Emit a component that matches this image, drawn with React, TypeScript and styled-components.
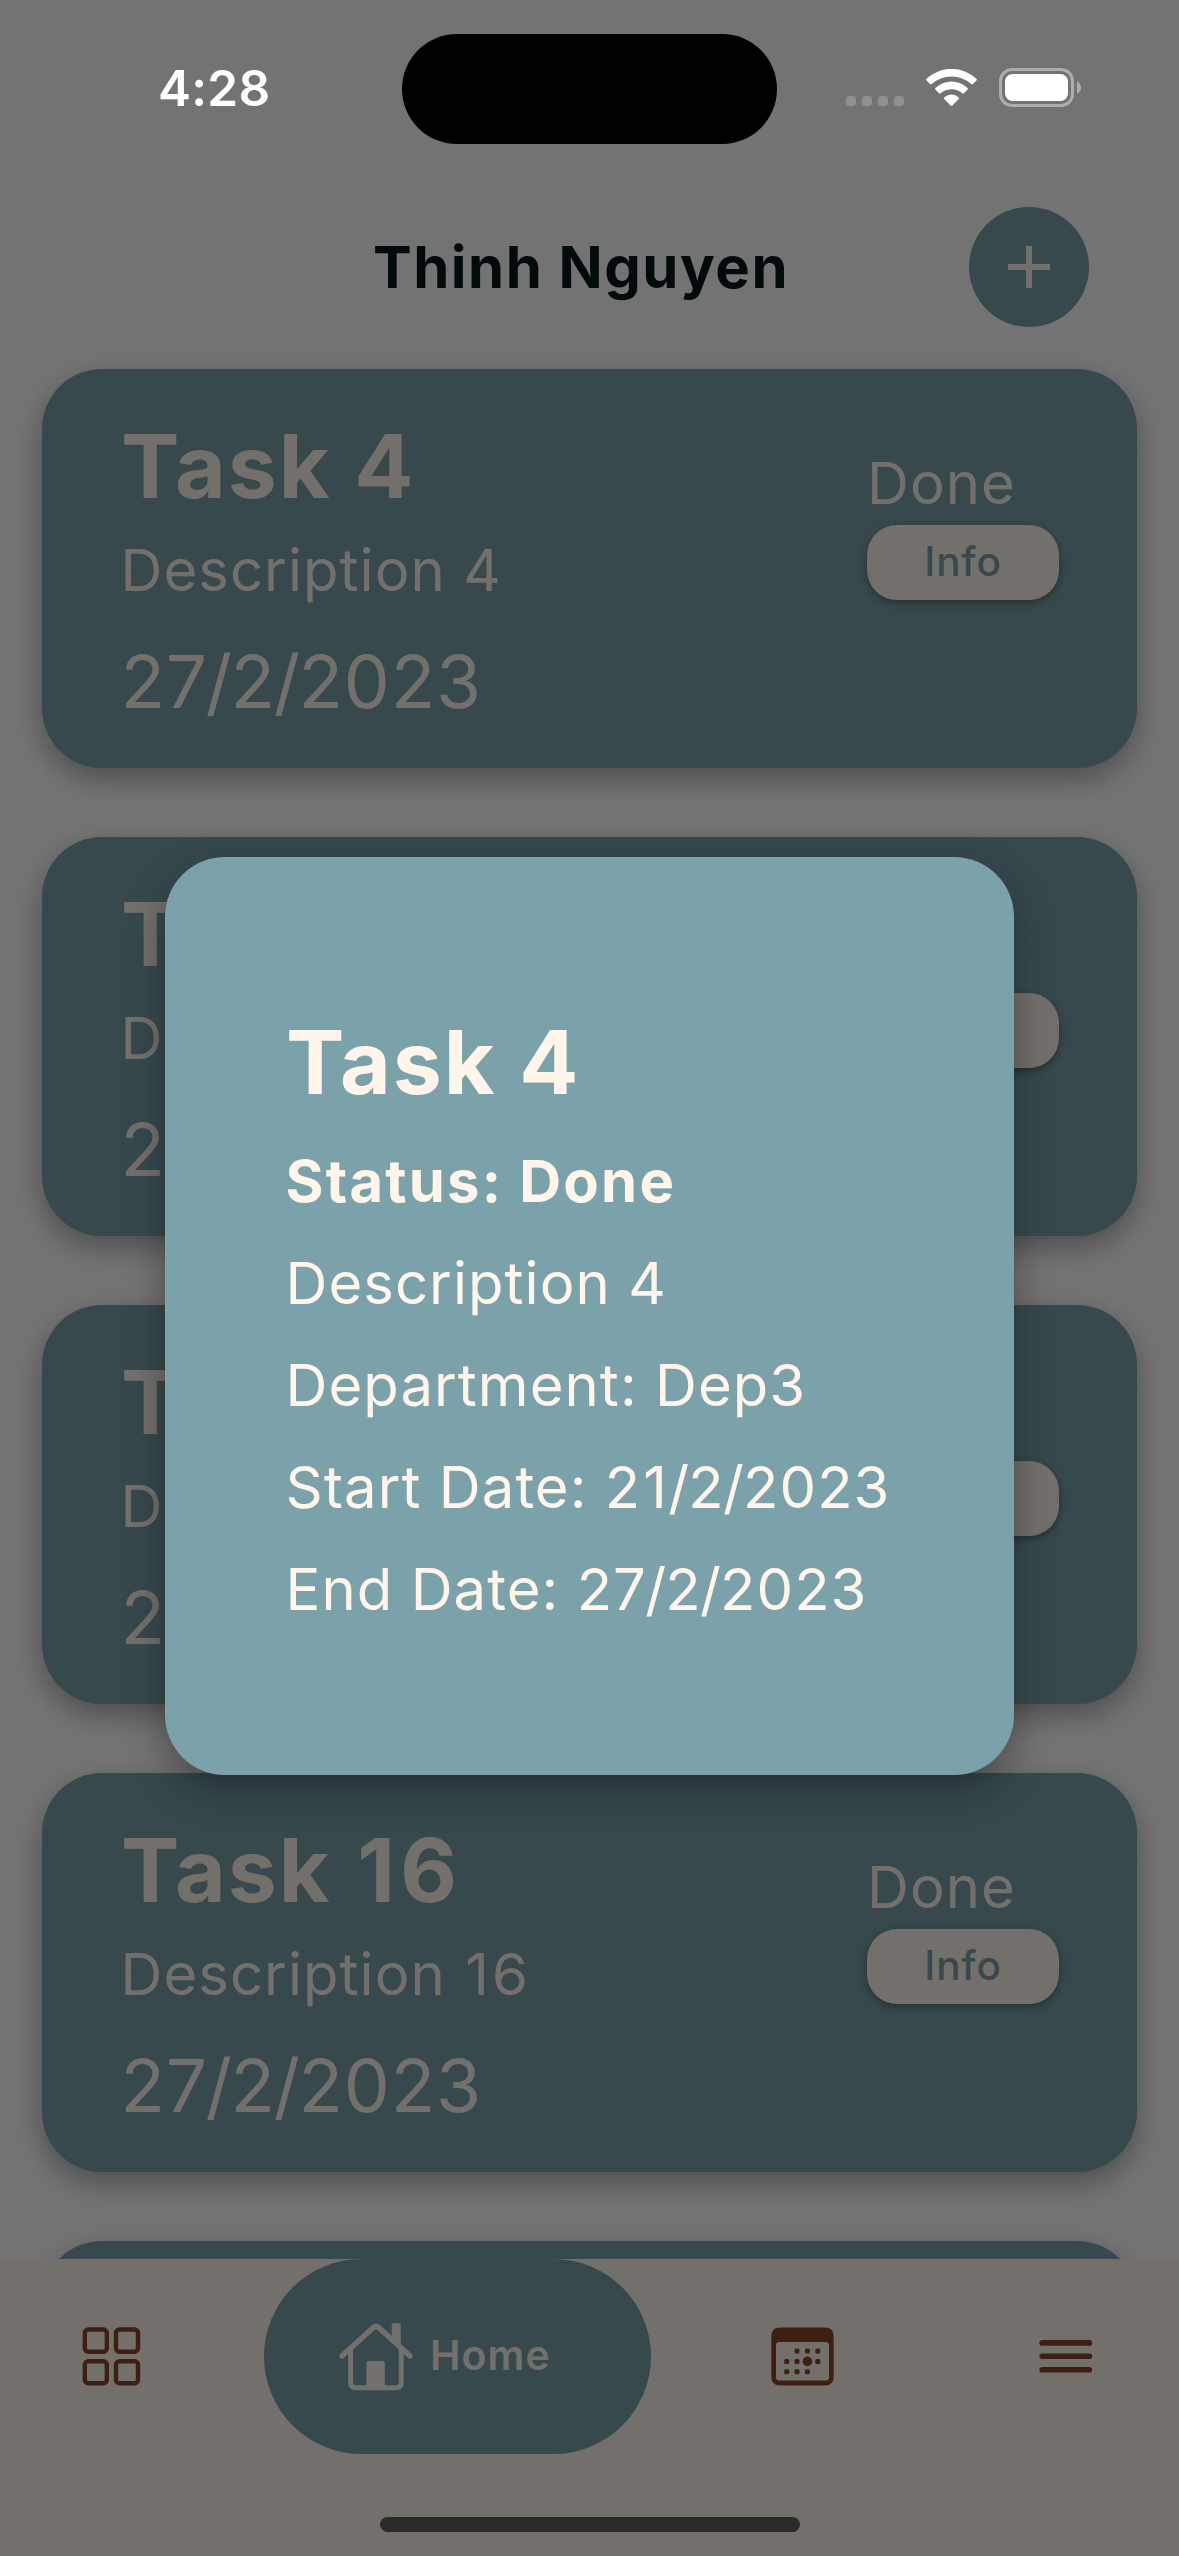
import React from "react";
import styled, { createGlobalStyle } from "styled-components";

const colors = {
  teal: "#7ba2aa",
  cream: "#fff5eb",
  rust: "#8e452c",
  ink: "#05181b",
};

const GlobalStyle = createGlobalStyle`
  * { box-sizing: border-box; }
  body {
    margin: 0;
    background: #fff;
    font-family: Inter, "Liberation Sans", sans-serif;
  }
`;

const Screen = styled.div`
  position: relative;
  display: flex;
  flex-direction: column;
  width: 1179px;
  height: 2556px;
  overflow: hidden;
  background: #fff;
`;

const StatusBar = styled.div`
  position: relative;
  z-index: 2;
  display: grid;
  grid-template-columns: 402px 375px 402px;
  align-items: center;
  height: 207px;
  padding: 34px 0 63px;
`;

const Clock = styled.div`
  padding: 0 0 2px 158px;
  color: #fff;
  font-size: 49.5px;
  font-weight: 600;
  line-height: 60px;
  letter-spacing: 0.3px;
`;

const Island = styled.div`
  height: 110px;
  border-radius: 55px;
  background: #000;
`;

const StatusIcons = styled.div`
  display: flex;
  justify-content: flex-end;
  align-items: center;
  gap: 22px;
  height: 39px;
  margin-bottom: 3px;
  padding-right: 98px;
`;

const Signal = styled.div`
  display: flex;
  gap: 6px;
  align-self: flex-end;
  padding-bottom: 1px;
`;

const SignalDot = styled.span`
  width: 10px;
  height: 10px;
  border-radius: 3px;
  background: #8f8f8f;
`;

const Header = styled.header`
  display: flex;
  justify-content: space-between;
  align-items: center;
  height: 120px;
  padding: 0 90px 0 373px;
`;

const UserName = styled.h1`
  margin: 0;
  color: ${colors.ink};
  font-size: 58px;
  font-weight: 700;
  line-height: 84px;
  letter-spacing: 1.5px;
  white-space: nowrap;
`;

const AddButton = styled.button`
  display: flex;
  align-items: center;
  justify-content: center;
  width: 120px;
  height: 120px;
  padding: 0;
  border: 0;
  border-radius: 60px;
  background: ${colors.teal};
`;

const TaskList = styled.main`
  flex: 1;
  display: flex;
  flex-direction: column;
  gap: 69px;
  min-height: 0;
  padding: 42px 42px 0;
  overflow: hidden;
`;

const Card = styled.article`
  flex: none;
  display: flex;
  justify-content: space-between;
  height: 399px;
  padding: 43px 78px 0 78.5px;
  border-radius: 60px;
  background: ${colors.teal};
  box-shadow: 0 11px 28px rgba(0, 0, 0, 0.32);
  color: ${colors.cream};
`;

const CardBody = styled.div`
  display: flex;
  flex-direction: column;
  white-space: nowrap;
`;

const CardSide = styled.div`
  display: flex;
  flex-direction: column;
  width: 192px;
  padding-top: 29px;
`;

const Title = styled.h2<{ $height: number }>`
  margin: 0;
  padding-left: 0.5px;
  font-size: 87.5px;
  font-weight: 700;
  line-height: ${(p) => p.$height}px;
  letter-spacing: 2px;
`;

const Line = styled.p<{ $height: number; $bold?: boolean }>`
  margin: 0;
  font-size: 58px;
  font-weight: ${(p) => (p.$bold ? 700 : 400)};
  line-height: ${(p) => p.$height}px;
  letter-spacing: ${(p) => (p.$bold ? 2.2 : 1.05)}px;
  white-space: nowrap;
`;

const DueDate = styled.p`
  margin: 0;
  font-size: 73px;
  line-height: 123px;
  letter-spacing: 0.8px;
`;

const Slash = styled.span`
  margin: 0 -0.031em;
`;

const NarrowOne = styled.span`
  margin: 0 0.035em;
`;

const InfoButton = styled.button`
  width: 192px;
  height: 75px;
  padding: 0 0 2px;
  border: 0;
  border-radius: 30px;
  background: ${colors.cream};
  box-shadow: 0 3px 9px rgba(0, 0, 0, 0.35);
  color: ${colors.teal};
  font: 500 40.5px/73px Inter, "Liberation Sans", sans-serif;
  letter-spacing: 0.8px;
`;

const TabBar = styled.nav`
  flex: none;
  display: flex;
  flex-direction: column;
  align-items: center;
  justify-content: space-between;
  height: 297px;
  padding-bottom: 24px;
  background: ${colors.cream};
`;

const Tabs = styled.div`
  display: grid;
  grid-template-columns: 223px 428px 302px 226px;
  align-items: center;
  justify-items: center;
  width: 100%;
  height: 195px;
`;

const HomeTab = styled.div`
  display: flex;
  align-items: center;
  justify-self: end;
  gap: 17px;
  width: 387px;
  height: 195px;
  padding-left: 74px;
  border-radius: 97.5px;
  background: ${colors.teal};
  color: ${colors.cream};
`;

const TabLabel = styled.span`
  font-size: 41px;
  font-weight: 600;
  line-height: 50px;
  letter-spacing: 1px;
  padding-bottom: 3px;
`;

const HomeIndicator = styled.div`
  position: relative;
  z-index: 2;
  width: 420px;
  height: 15px;
  border-radius: 8px;
  background: #2c2c2c;
`;

const Backdrop = styled.div`
  position: absolute;
  inset: 0;
  z-index: 1;
  display: flex;
  align-items: center;
  justify-content: center;
  padding-top: 75px;
  background: rgba(0, 0, 0, 0.55);
`;

const Dialog = styled.section`
  width: 849px;
  height: 918px;
  padding: 137px 120px 0 120.5px;
  border-radius: 60px;
  background: ${colors.teal};
  box-shadow: 0 15px 38px rgba(0, 0, 0, 0.34);
  color: ${colors.cream};
`;

const Icon = styled.svg`
  display: block;
  flex: none;
`;

const WifiIcon = () => (
  <Icon width="51" height="37" viewBox="0 0 51 37" fill="#fff">
    <path d="M.6 9.8A36.2 36.2 0 0 1 50.4 9.8Q51.2 10.6 50.4 11.4L47 14.9Q46.2 15.7 45.3 14.9A30.3 30.3 0 0 0 5.7 14.9Q4.8 15.7 4 14.9L.6 11.4Q-.2 10.6.6 9.8Z" />
    <path d="M9.4 19A23.4 23.4 0 0 1 41.6 19Q42.4 19.8 41.6 20.6L38 24.2Q37.2 25 36.3 24.3A16.2 16.2 0 0 0 14.7 24.3Q13.8 25 13 24.2L9.4 20.6Q8.6 19.8 9.4 19Z" />
    <path d="M18.2 28.4A10.9 10.9 0 0 1 32.8 28.4Q33.6 29.2 32.8 30L26.4 36.5Q25.5 37.3 24.6 36.5L18.2 30Q17.4 29.2 18.2 28.4Z" />
  </Icon>
);

const BatteryIcon = () => (
  <Icon width="82" height="39" viewBox="0 0 82 39">
    <rect x="1.5" y="1.5" width="72" height="36" rx="11.5" fill="none" stroke="#adadad" strokeWidth="3" />
    <rect x="6" y="6" width="63" height="27" rx="7.5" fill="#fff" />
    <path d="M78 13.2Q82 15.4 82 19.5T78 25.8Z" fill="#adadad" />
  </Icon>
);

const PlusIcon = () => (
  <Icon width="42" height="42" viewBox="0 0 42 42" fill={colors.cream}>
    <path d="M18 0h6v18h18v6H24v18h-6V24H0v-6h18Z" />
  </Icon>
);

const GridIcon = () => (
  <Icon width="59" height="59" viewBox="0 0 59 59" fill="none" stroke={colors.rust} strokeWidth="4.4">
    <rect x="2.8" y="2.5" width="22" height="22.2" rx="3.4" />
    <rect x="34" y="2.5" width="22" height="22.2" rx="3.4" />
    <rect x="2.8" y="34.2" width="22" height="22" rx="3.4" />
    <rect x="34" y="34.2" width="22" height="22" rx="3.4" />
  </Icon>
);

const HomeIcon = () => (
  <Icon width="75" height="68" viewBox="0 0 75 68" fill="none" stroke={colors.cream} strokeLinecap="round" strokeLinejoin="round">
    <path d="M3.9 32.9 35.4 4.6Q38 2.5 40.6 4.6L72.1 32.9" strokeWidth="5.4" />
    <path d="M12.6 26V59.5Q12.6 64.8 17.9 64.8H57.9Q63.2 64.8 63.2 59.5V26" strokeWidth="5" />
    <path d="M28.4 64V39.8Q28.4 38 30.2 38H45Q46.8 38 46.8 39.8V64Z" fill={colors.cream} stroke="none" />
    <path d="M53.7 17V2Q53.7 0 55.7 0H60.7Q62.7 0 62.7 2V25Z" fill={colors.cream} stroke="none" />
  </Icon>
);

const CalendarIcon = () => (
  <Icon width="63" height="59" viewBox="0 0 63 59" fill={colors.rust}>
    <path
      fillRule="evenodd"
      d="M9 .5H54Q62.7.5 62.7 9.2V49.8Q62.7 58.5 54 58.5H9Q.3 58.5.3 49.8V9.2Q.3.5 9 .5ZM8.2 15Q5 15 5 18.2V50.3Q5 53.5 8.2 53.5H54.8Q58 53.5 58 50.3V18.2Q58 15 54.8 15Z"
    />
    {[
      [26, 24], [36.4, 24], [46.8, 24],
      [15.7, 34.4], [26, 34.4], [46.8, 34.4],
      [15.7, 44.8], [26, 44.8], [36.4, 44.8],
    ].map(([x, y]) => (
      <rect key={`${x}-${y}`} x={x - 2.5} y={y - 2.5} width="5" height="5" rx="1.5" />
    ))}
    <circle cx="36.4" cy="34.4" r="4.8" />
  </Icon>
);

const MenuIcon = () => (
  <Icon width="54" height="35" viewBox="0 0 54 35" stroke={colors.rust} strokeWidth="5.6" strokeLinecap="round">
    <path d="M3.2 3.9H50.4M3.2 17.3H50.4M3.2 30.7H50.4" />
  </Icon>
);

// Evens out the optical spacing of slashes and the narrow digit one.
const Figures = ({ value }: { value: string }) => (
  <>
    {value.split(/([/1])/).map((part, i) => {
      if (part === "/") return <Slash key={i}>/</Slash>;
      if (part === "1") return <NarrowOne key={i}>1</NarrowOne>;
      return part;
    })}
  </>
);

const tasks = [4, 8, 12, 16, 20].map((id) => ({
  id,
  title: `Task ${id}`,
  description: `Description ${id}`,
  due: "27/2/2023",
  status: "Done",
}));

const TaskCard = ({ task }: { task: (typeof tasks)[number] }) => (
  <Card>
    <CardBody>
      <Title $height={108}>
        <Figures value={task.title} />
      </Title>
      <Line $height={100}>
        <Figures value={task.description} />
      </Line>
      <DueDate>
        <Figures value={task.due} />
      </DueDate>
    </CardBody>
    <CardSide>
      <Line $height={84}>{task.status}</Line>
      <InfoButton>Info</InfoButton>
    </CardSide>
  </Card>
);

export default function App() {
  return (
    <>
      <GlobalStyle />
      <Screen>
        <StatusBar>
          <Clock>4:28</Clock>
          <Island />
          <StatusIcons>
            <Signal>
              <SignalDot />
              <SignalDot />
              <SignalDot />
              <SignalDot />
            </Signal>
            <WifiIcon />
            <BatteryIcon />
          </StatusIcons>
        </StatusBar>
        <Header>
          <UserName>Thinh Nguyen</UserName>
          <AddButton aria-label="Add task">
            <PlusIcon />
          </AddButton>
        </Header>
        <TaskList>
          {tasks.map((task) => (
            <TaskCard key={task.id} task={task} />
          ))}
        </TaskList>
        <TabBar>
          <Tabs>
            <GridIcon />
            <HomeTab>
              <HomeIcon />
              <TabLabel>Home</TabLabel>
            </HomeTab>
            <CalendarIcon />
            <MenuIcon />
          </Tabs>
          <HomeIndicator />
        </TabBar>
        <Backdrop>
          <Dialog role="dialog">
            <Title $height={137}>Task 4</Title>
            <Line $height={101} $bold>Status: Done</Line>
            <Line $height={102}>Description 4</Line>
            <Line $height={102}>Department: Dep3</Line>
            <Line $height={102}>
              <Figures value="Start Date: 21/2/2023" />
            </Line>
            <Line $height={102}>
              <Figures value="End Date: 27/2/2023" />
            </Line>
          </Dialog>
        </Backdrop>
      </Screen>
    </>
  );
}
